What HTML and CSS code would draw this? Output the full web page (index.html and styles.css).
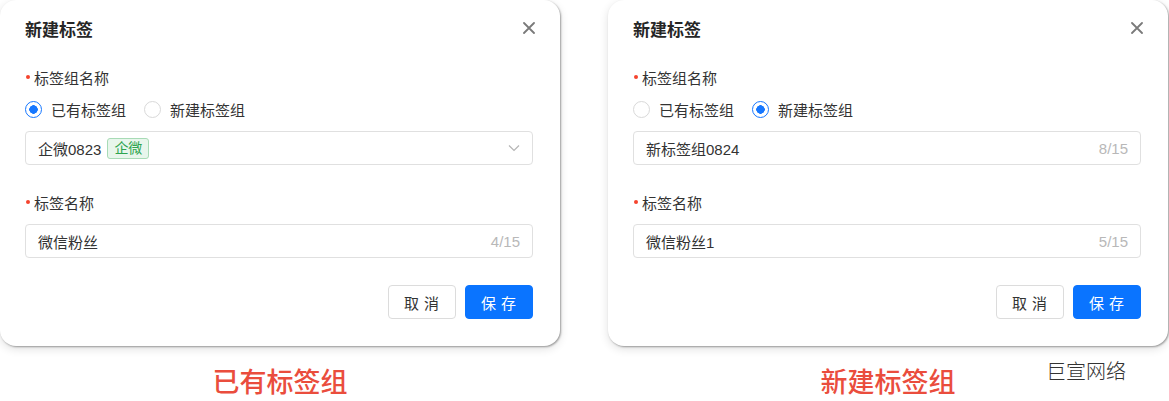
FILE: index.html
```html
<!DOCTYPE html>
<html lang="zh">
<head>
    <meta charset="UTF-8">
    <title>新建标签</title>
    <link rel="stylesheet" href="styles.css">
</head>
<body>
    <div class="page">
        <div class="col">
            <div class="dialog">
                <div class="head">
                    <span class="title">新建标签</span>
                    <svg class="close" width="12" height="12" viewBox="0 0 12 12"><path d="M1 1L11 11M11 1L1 11" stroke="#7a7a7a" stroke-width="1.8" stroke-linecap="round"/></svg>
                </div>
                <div class="label"><i class="req"></i>标签组名称</div>
                <div class="radios">
                    <span class="radio on"><i></i>已有标签组</span>
                    <span class="radio"><i></i>新建标签组</span>
                </div>
                <div class="field">
                    <span class="val">企微0823</span>
                    <span class="tag">企微</span>
                    <svg class="arrow" width="12" height="8" viewBox="0 0 12 8"><path d="M1 1.5L6 6.5L11 1.5" fill="none" stroke="#b5b5b5" stroke-width="1.2"/></svg>
                </div>
                <div class="label second"><i class="req"></i>标签名称</div>
                <div class="field">
                    <span class="val">微信粉丝</span>
                    <span class="count">4/15</span>
                </div>
                <div class="btns">
                    <button class="btn">取消</button>
                    <button class="btn primary">保存</button>
                </div>
            </div>
            <div class="caption">已有标签组</div>
        </div>
        <div class="col">
            <div class="dialog">
                <div class="head">
                    <span class="title">新建标签</span>
                    <svg class="close" width="12" height="12" viewBox="0 0 12 12"><path d="M1 1L11 11M11 1L1 11" stroke="#7a7a7a" stroke-width="1.8" stroke-linecap="round"/></svg>
                </div>
                <div class="label"><i class="req"></i>标签组名称</div>
                <div class="radios">
                    <span class="radio"><i></i>已有标签组</span>
                    <span class="radio on"><i></i>新建标签组</span>
                </div>
                <div class="field">
                    <span class="val">新标签组0824</span>
                    <span class="count">8/15</span>
                </div>
                <div class="label second"><i class="req"></i>标签名称</div>
                <div class="field">
                    <span class="val">微信粉丝1</span>
                    <span class="count">5/15</span>
                </div>
                <div class="btns">
                    <button class="btn">取消</button>
                    <button class="btn primary">保存</button>
                </div>
            </div>
            <div class="caption">新建标签组<span class="mark">巨宣网络</span></div>
        </div>
    </div>
</body>
</html>
```

FILE: styles.css
```css
body {
    margin: 0;
    background: #fff;
    font-family: "Liberation Sans", "Noto Sans CJK SC", sans-serif;
    color: #333;
}
.page {
    display: flex;
    gap: 48px;
}
.col {
    width: 560px;
}
.dialog {
    box-sizing: border-box;
    height: 346px;
    padding: 16px 27px 0 25px;
    background: #fff;
    border-radius: 16px;
    box-shadow: 1px 1px 2px rgba(0, 0, 0, .35), 0 3px 10px rgba(0, 0, 0, .12);
}
.head {
    display: flex;
    align-items: center;
    justify-content: space-between;
    height: 24px;
}
.title {
    font-size: 17px;
    font-weight: 700;
    color: #262626;
}
.close {
    margin-right: -2px;
}
.label {
    display: flex;
    align-items: center;
    margin-top: 26px;
    height: 22px;
    font-size: 15px;
    color: #333;
}
.req {
    width: 4px;
    height: 4px;
    margin: 0 4px 0 1px;
    border-radius: 50%;
    background: #f5432d;
}
.radios {
    display: flex;
    gap: 18px;
    margin-top: 10px;
    height: 22px;
    font-size: 15px;
}
.radio {
    display: flex;
    align-items: center;
    gap: 9px;
    color: #333;
}
.radio i {
    box-sizing: border-box;
    width: 17px;
    height: 17px;
    border: 1px solid #d9d9d9;
    border-radius: 50%;
    background: #fff;
}
.radio.on i {
    border-color: #1677ff;
    background: radial-gradient(circle, #1677ff 0 4px, #fff 4.5px);
}
.field {
    box-sizing: border-box;
    display: flex;
    align-items: center;
    height: 34px;
    margin-top: 11px;
    padding: 0 12px;
    border: 1px solid #e0e0e0;
    border-radius: 4px;
    font-size: 15px;
}
.val {
    color: #333;
}
.tag {
    margin-left: 6px;
    padding: 0 6px;
    height: 21px;
    line-height: 19px;
    box-sizing: border-box;
    font-size: 14px;
    color: #2ea44f;
    background: #e8f6ec;
    border: 1px solid #a8dbb6;
    border-radius: 3px;
}
.arrow {
    margin-left: auto;
}
.count {
    margin-left: auto;
    color: #b8b8b8;
}
.btns {
    display: flex;
    justify-content: flex-end;
    gap: 9px;
    margin-top: 27px;
}
.btn {
    width: 68px;
    height: 34px;
    padding: 0 0 0 4px;
    border: 1px solid #dcdcdc;
    border-radius: 4px;
    background: #fff;
    font: 15px "Noto Sans CJK SC", sans-serif;
    letter-spacing: 5px;
    color: #333;
}
.btn.primary {
    border-color: #0a74ff;
    background: #0a74ff;
    color: #fff;
}
.caption {
    position: relative;
    margin-top: 21px;
    text-align: center;
    font-size: 27px;
    line-height: 32px;
    font-weight: 500;
    color: #ea4d3d;
}
.mark {
    position: absolute;
    right: 42px;
    top: -11px;
    font-size: 20px;
    font-weight: 300;
    color: #333;
}
```
